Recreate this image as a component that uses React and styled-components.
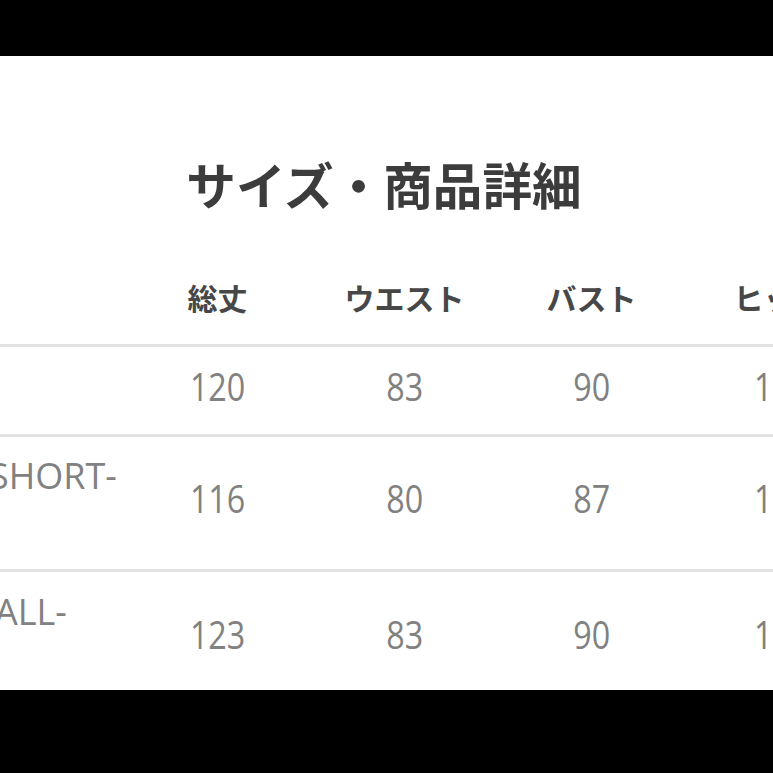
import React from 'react';
import styled, { createGlobalStyle } from 'styled-components';

const GlobalStyle = createGlobalStyle`
  html, body {
    margin: 0;
    padding: 0;
    background: #000;
    overflow: hidden;
  }
`;

// Styled components
const Screen = styled.div`
  width: 773px;
  height: 773px;
  background: #000;
  display: flex;
  flex-direction: column;
  overflow: hidden;
`;

const TopBand = styled.div`
  height: 56px;
  flex: none;
`;

const Sheet = styled.div`
  height: 634px;
  flex: none;
  background: #fff;
  overflow: hidden;
`;

const Title = styled.h1`
  margin: 103px 0 0;
  padding-right: 5px;
  font-family: 'Noto Sans CJK JP', sans-serif;
  font-size: 49.6px;
  line-height: 49px;
  font-weight: 700;
  color: #3c3c3c;
  text-align: center;
  white-space: nowrap;
`;

const Row = styled.div`
  display: grid;
  grid-template-columns: 124px repeat(3, 187px) 193px;
  align-items: center;
  height: ${(p) => p.$height}px;
  padding-bottom: ${(p) => p.$lift || 0}px;
  box-sizing: border-box;
  border-bottom: 3px solid #e3e3e3;
`;

const HeadRow = styled(Row)`
  align-items: end;
  padding: 0 0 32px;
`;

const HeadCell = styled.div`
  font-family: 'Noto Sans CJK JP', sans-serif;
  font-size: 30px;
  line-height: 1;
  font-weight: 700;
  color: #474747;
  text-align: center;
  white-space: nowrap;
  padding-right: ${(p) => (p.$last ? 6 : 0)}px;
`;

const ValueCell = styled.div`
  text-align: center;
  white-space: nowrap;
`;

const Digits = styled.span`
  display: inline-block;
  font-family: 'Open Sans', sans-serif;
  font-size: 38px;
  line-height: 1;
  font-weight: 400;
  color: #818181;
  transform: scaleX(0.85);
`;

const LabelCell = styled.div`
  font-family: 'Open Sans', sans-serif;
  font-size: 36px;
  line-height: 44px;
  color: #818181;
  white-space: nowrap;
  overflow: hidden;
  text-indent: ${(p) => p.$shift}px;
`;

const headers = ['総丈', 'ウエスト', 'バスト', 'ヒップ'];

const rows = [
  { label: ['', ''], shift: 0, height: 90, values: ['120', '83', '90', '100'] },
  { label: ['SHORT-', ''], shift: -11, height: 135, values: ['116', '80', '87', '100'] },
  { label: ['ALL-', ''], shift: -5, height: 140, values: ['123', '83', '90', '100'] },
];

const App = () => (
  <Screen>
    <GlobalStyle />
    <TopBand />
    <Sheet>
      <Title>サイズ・商品詳細</Title>
      <HeadRow $height={139}>
        <HeadCell />
        {headers.map((h, i) => (
          <HeadCell key={h} $last={i === headers.length - 1}>
            {h}
          </HeadCell>
        ))}
      </HeadRow>
      {rows.map((r, i) => (
        <Row key={i} $height={r.height} $lift={i === 2 ? 14 : 10}>
          <LabelCell $shift={r.shift}>
            {r.label[0]}
            <br />
            {r.label[1] || '\u00a0'}
          </LabelCell>
          {r.values.map((v, j) => (
            <ValueCell key={j}>
              <Digits>{v}</Digits>
            </ValueCell>
          ))}
        </Row>
      ))}
    </Sheet>
  </Screen>
);

export default App;
